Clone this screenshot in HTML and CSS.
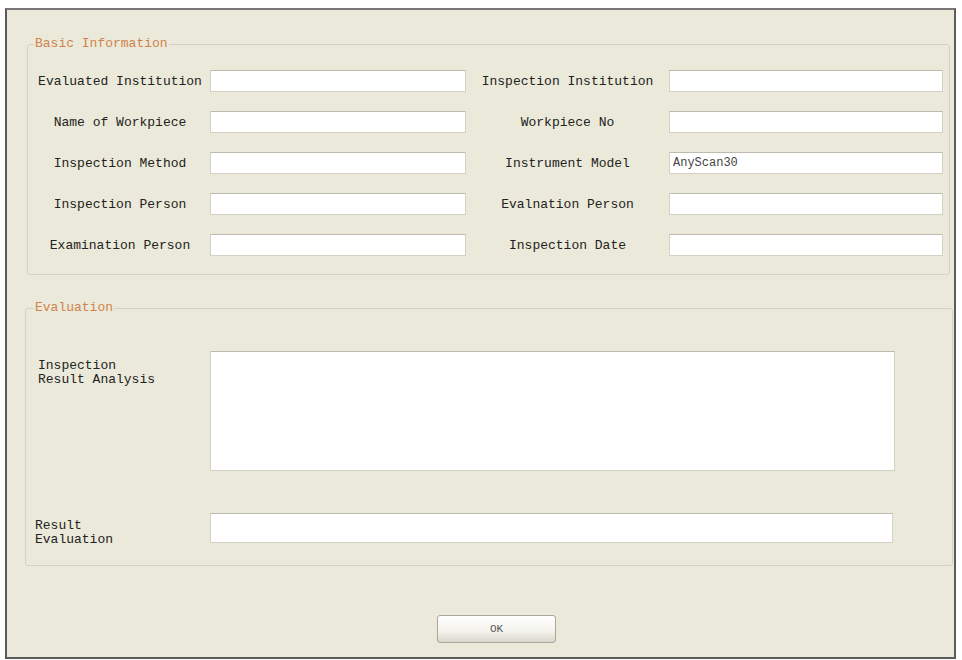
FILE: index.html
```html
<!DOCTYPE html>
<html lang="en">
<head>
  <meta charset="UTF-8" />
  <title>Inspection Report</title>
  <link rel="stylesheet" href="styles.css">
</head>
<body>

  <div class="window">

    <fieldset class="group basic">
      <legend>Basic Information</legend>
      <div class="basic-grid">
        <label class="lbl">Evaluated Institution</label>
        <input type="text" class="field" />
        <label class="lbl">Inspection Institution</label>
        <input type="text" class="field" />

        <label class="lbl">Name of Workpiece</label>
        <input type="text" class="field" />
        <label class="lbl">Workpiece No</label>
        <input type="text" class="field" />

        <label class="lbl">Inspection Method</label>
        <input type="text" class="field" />
        <label class="lbl">Instrument Model</label>
        <input type="text" class="field" value="AnyScan30" />

        <label class="lbl">Inspection Person</label>
        <input type="text" class="field" />
        <label class="lbl">Evalnation Person</label>
        <input type="text" class="field" />

        <label class="lbl">Examination Person</label>
        <input type="text" class="field" />
        <label class="lbl">Inspection Date</label>
        <input type="text" class="field" />
      </div>
    </fieldset>

    <fieldset class="group evaluation">
      <legend>Evaluation</legend>
      <div class="eval-grid">
        <label class="lbl-left analysis">Inspection<br />Result Analysis</label>
        <textarea class="field area"></textarea>

        <label class="lbl-left result">Result<br />Evaluation</label>
        <input type="text" class="field wide" />
      </div>
    </fieldset>

    <button class="ok-btn">OK</button>

  </div>

</body>
</html>
```

FILE: styles.css
```css
body {
  margin: 0;
  background: #ffffff;
  font-family: "Liberation Mono", "DejaVu Sans Mono", monospace;
  font-size: 13px;
  color: #222;
}

.window {
  margin: 8px 0 0 5px;
  width: 951px;
  height: 651px;
  box-sizing: border-box;
  border: 2px solid #5b5b5b;
  border-top-color: #777;
  background: #ebe9d9;
}

.group {
  border: 1px solid #d5d2c2;
  border-radius: 3px;
  padding: 0 6px;
  box-sizing: border-box;
}

.group legend {
  color: #d0834f;
  line-height: 16px;
  padding: 0 1px;
}

.basic {
  margin: 26px 0 0 20px;
  width: 923px;
  padding-top: 18px;
  padding-bottom: 18px;
}

.basic-grid {
  display: grid;
  grid-template-columns: 172px 256px 195px 274px;
  grid-auto-rows: 22px;
  column-gap: 4px;
  row-gap: 19px;
  align-items: center;
}

.lbl {
  text-align: center;
  white-space: nowrap;
}

.field {
  font-family: "Liberation Mono", monospace;
  font-size: 12px;
  color: #444;
  background: #fff;
  border: 1px solid #d3d1c6;
  border-top-color: #bdbbb0;
  box-sizing: border-box;
  padding: 0 3px;
  margin: 0;
  height: 22px;
  width: 100%;
  outline: none;
}

.evaluation {
  margin: 25px 0 0 18px;
  width: 928px;
  padding: 35px 8px 22px;
}

.eval-grid {
  display: grid;
  grid-template-columns: 176px 685px;
  row-gap: 42px;
}

.lbl-left {
  line-height: 14px;
}

.analysis {
  padding: 8px 0 0 4px;
}

.result {
  align-self: start;
  padding: 6px 0 0 1px;
  margin-bottom: -6px;
}

.area {
  height: 120px;
  resize: none;
}

.wide {
  height: 30px;
  width: 683px;
}

.ok-btn {
  display: block;
  margin: 49px 0 0 430px;
  width: 119px;
  height: 28px;
  font-family: "Liberation Mono", monospace;
  font-size: 11px;
  color: #555;
  border: 1px solid #a9a79c;
  border-radius: 3px;
  background: linear-gradient(#ffffff, #f3f2ec 60%, #d9d7cc);
  cursor: pointer;
}
```
